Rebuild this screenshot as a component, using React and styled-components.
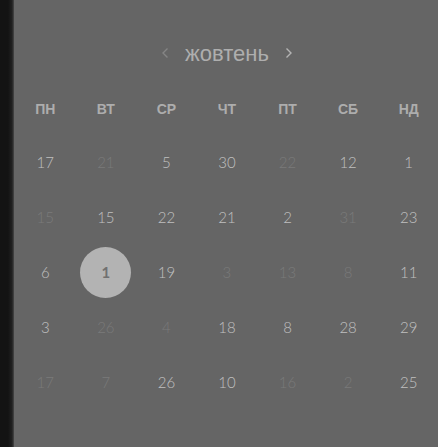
import React from "react";
import styled, { createGlobalStyle } from "styled-components";

const GlobalStyle = createGlobalStyle`
  * { box-sizing: border-box; }
  body { margin: 0; background: #656565; }
`;

const Page = styled.div`
  display: flex;
  min-height: 100vh;
  background: #656565;
`;

const Edge = styled.div`
  flex: 0 0 14px;
  background: linear-gradient(to right, #131313 0, #131313 8px, #202020 12px, #484848 14px);
`;

const Calendar = styled.main`
  flex: 1;
  min-width: 0;
  padding: 38px 0 24px;
`;

const MonthBar = styled.header`
  display: flex;
  align-items: center;
  justify-content: center;
  gap: 12px;
  height: 32px;
  padding-left: 2px;
`;

const MonthName = styled.h1`
  margin: 0;
  font: 400 22px/32px "Liberation Sans", Arial, sans-serif;
  color: #aeaeae;
`;

const ArrowButton = styled.button`
  display: flex;
  align-items: flex-start;
  justify-content: center;
  width: 16px;
  height: 30px;
  padding: 8px 0;
  border: 0;
  background: none;
  color: ${({ $muted }) => ($muted ? "#858585" : "#b4b4b4")};
  cursor: pointer;
`;

const Grid = styled.table`
  width: 100%;
  margin-top: 12px;
  table-layout: fixed;
  border-collapse: collapse;
`;

const Weekday = styled.th`
  height: 53px;
  padding: 0 0 0 2px;
  font: 700 14px/20px "Liberation Sans", Arial, sans-serif;
  color: #adadad;
`;

const DayCell = styled.td`
  height: 55px;
  padding: 0 0 0 2px;
  text-align: center;
`;

const DayButton = styled.button`
  width: 51px;
  height: 51px;
  padding: 0 0 2px;
  border: 0;
  border-radius: 50%;
  background: ${({ $selected }) => ($selected ? "#b3b3b3" : "transparent")};
  font: ${({ $selected }) => ($selected ? 700 : 300)} 15px/20px Lato, sans-serif;
  color: ${({ $selected, $muted }) => ($selected ? "#707070" : $muted ? "#7a7a7a" : "#c0c0c0")};
  vertical-align: middle;
  cursor: pointer;
`;

const weekdays = ["ПН", "ВТ", "СР", "ЧТ", "ПТ", "СБ", "НД"];

const on = (day) => ({ day });
const off = (day) => ({ day, muted: true });

const weeks = [
  [on(17), off(21), on(5), on(30), off(22), on(12), on(1)],
  [off(15), on(15), on(22), on(21), on(2), off(31), on(23)],
  [on(6), { day: 1, selected: true }, on(19), off(3), off(13), off(8), on(11)],
  [on(3), off(26), off(4), on(18), on(8), on(28), on(29)],
  [off(17), off(7), on(26), on(10), off(16), off(2), on(25)],
];

function Chevron({ points }) {
  return (
    <svg width="8" height="12" viewBox="0 0 8 12" fill="none" stroke="currentColor" strokeWidth="1.4" aria-hidden="true">
      <polyline points={points} />
    </svg>
  );
}

export default function App() {
  return (
    <Page>
      <GlobalStyle />
      <Edge />
      <Calendar>
        <MonthBar>
          <ArrowButton type="button" $muted aria-label="Попередній місяць">
            <Chevron points="6.5,1.5 2,6 6.5,10.5" />
          </ArrowButton>
          <MonthName>жовтень</MonthName>
          <ArrowButton type="button" aria-label="Наступний місяць">
            <Chevron points="1.5,1.5 6,6 1.5,10.5" />
          </ArrowButton>
        </MonthBar>
        <Grid>
          <thead>
            <tr>
              {weekdays.map((name) => (
                <Weekday key={name} scope="col">{name}</Weekday>
              ))}
            </tr>
          </thead>
          <tbody>
            {weeks.map((week, row) => (
              <tr key={row}>
                {week.map(({ day, muted, selected }, column) => (
                  <DayCell key={column}>
                    <DayButton type="button" $muted={muted} $selected={selected} aria-pressed={!!selected}>
                      {day}
                    </DayButton>
                  </DayCell>
                ))}
              </tr>
            ))}
          </tbody>
        </Grid>
      </Calendar>
    </Page>
  );
}
